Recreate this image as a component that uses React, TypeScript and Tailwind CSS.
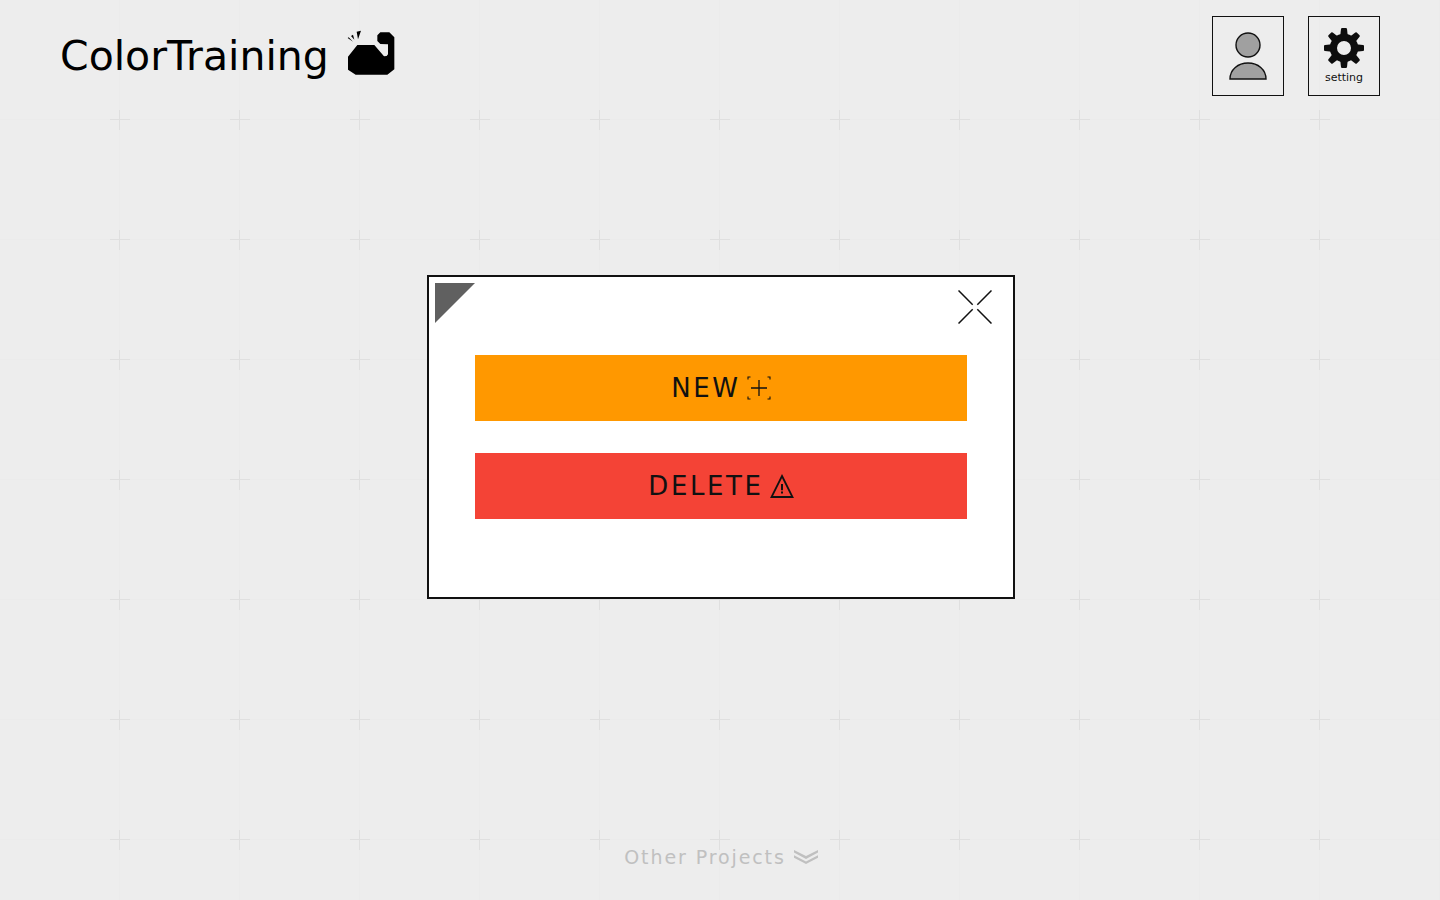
const toothAngles = [0, 45, 90, 135, 180, 225, 270, 315];

function GridBackground() {
  return (
    <div aria-hidden="true" className="pointer-events-none absolute inset-0 -z-10 bg-[#ededed]">
      <svg className="absolute inset-0 h-full w-full">
        <defs>
          <pattern id="lines" width="120" height="120" patternUnits="userSpaceOnUse">
            <path d="M119.5 0V120M0 119.5H120" stroke="#ebebeb" />
          </pattern>
        </defs>
        <rect width="100%" height="100%" fill="url(#lines)" />
      </svg>
      <div className="absolute inset-0 overflow-hidden px-15">
        <svg className="h-full w-full">
          <defs>
            <pattern id="marks" y="60" width="120" height="120" patternUnits="userSpaceOnUse">
              <path d="M59.5 50V70M50 59.5H70" stroke="#dfdfdf" />
            </pattern>
          </defs>
          <rect y="60" width="100%" height="100%" fill="url(#marks)" />
        </svg>
      </div>
    </div>
  );
}

function ArmLogo() {
  return (
    <svg aria-hidden="true" viewBox="24 24 144 138" className="h-[46px] w-12">
      <path d="M27 104 55 69H106L135 103 143 102 147 97V67L124 66 115 57V40L124 31H151L166 46V142L145 158H50L27 143Z" />
      <path d="M26 48 29 46 42 59ZM36 42 42 38 46 53ZM53 29 66 26 57 52Z" />
    </svg>
  );
}

function PersonIcon() {
  return (
    <svg aria-hidden="true" viewBox="0 0 40 50" className="h-[50px] w-10" fill="#a0a0a0" stroke="#111" strokeWidth="1.4">
      <circle cx="20" cy="14" r="12" />
      <path d="M2 48C2 38.5 10 32 20 32S38 38.5 38 48Z" />
    </svg>
  );
}

function GearIcon() {
  return (
    <svg aria-hidden="true" viewBox="-20 -20 40 40" className="size-10" fill="#0d0d0d">
      <circle r="10.6" fill="none" stroke="#0d0d0d" strokeWidth="7.2" />
      {toothAngles.map((angle) => (
        <path
          key={angle}
          transform={`rotate(${angle})`}
          d="M-3.8-12 -3-19Q-2.8-20-2-20H2Q2.8-20 3-19L3.8-12Z"
        />
      ))}
    </svg>
  );
}

function CloseIcon() {
  return (
    <svg aria-hidden="true" viewBox="0 0 34 34" className="size-[34px]" stroke="#111" strokeWidth="1.5">
      <path d="M.5.5 14.7 14.7M33.5.5 19.3 14.7M.5 33.5 14.7 19.3M33.5 33.5 19.3 19.3" />
    </svg>
  );
}

function AddIcon() {
  return (
    <svg aria-hidden="true" viewBox="0 0 24 24" className="size-6" fill="none" stroke="#111">
      <path d="M12 4V20M4 12H20" strokeWidth="1.3" />
      <path d="M1 3.5V1H3.5M20.5 1H23V3.5M23 20.5V23H20.5M3.5 23H1V20.5" strokeWidth="1.1" />
    </svg>
  );
}

function WarningIcon() {
  return (
    <svg aria-hidden="true" viewBox="0 0 24 24" className="size-6" fill="none" stroke="#111">
      <path d="M12 2 22.5 23H1.5Z" strokeWidth="1.8" />
      <path d="M12 10V16.2M12 17.6V19.4" strokeWidth="2" />
    </svg>
  );
}

function DoubleChevron() {
  return (
    <svg aria-hidden="true" viewBox="0 0 24 14" className="h-3.5 w-6" fill="#c0c0c0">
      <path d="M0 0 12 6 24 0V2.6L12 9 0 2.6Z" />
      <path d="M0 5.2 12 11.4 24 5.2V7.8L12 14 0 7.8Z" />
    </svg>
  );
}

export default function App() {
  return (
    <div className="relative isolate flex min-h-screen flex-col font-['DejaVu_Sans',sans-serif] text-[#111]">
      <GridBackground />

      <header className="flex items-center justify-between px-15 py-4">
        <div className="flex items-start gap-[18px]">
          <h1 className="text-[41px] leading-[52px] text-black">ColorTraining</h1>
          <ArmLogo />
        </div>
        <nav className="flex gap-6">
          <button type="button" aria-label="Account" className="flex h-20 w-18 items-center justify-center border border-[#111]">
            <PersonIcon />
          </button>
          <button type="button" className="flex h-20 w-18 flex-col items-center justify-center gap-1 border border-[#111] text-[11px] leading-3">
            <GearIcon />
            setting
          </button>
        </nav>
      </header>

      <main className="flex flex-1 items-center justify-center pl-0.5">
        <section role="dialog" aria-label="Color set" className="w-full max-w-[588px] border-2 border-[#111] bg-white px-1.5 pt-1.5 pb-[78px]">
          <div className="flex h-12 items-center justify-between pr-[15px]">
            <svg aria-hidden="true" viewBox="0 0 40 40" className="size-10 self-start" fill="#606060">
              <path d="M0 0H40L0 40Z" />
            </svg>
            <button type="button" aria-label="Close">
              <CloseIcon />
            </button>
          </div>
          <div className="mx-10 mt-6 flex flex-col gap-8 text-[26px]">
            <button type="button" className="flex h-[66px] items-center justify-center gap-1.5 bg-[#ff9800] tracking-widest">
              NEW
              <AddIcon />
            </button>
            <button type="button" className="flex h-[66px] items-center justify-center gap-1.5 bg-[#f44336] tracking-widest">
              DELETE
              <WarningIcon />
            </button>
          </div>
        </section>
      </main>

      <footer className="flex justify-center pt-[83px] pb-[31px] pl-0.5">
        <a href="#projects" className="flex items-center gap-2 text-[19px] leading-6 tracking-widest text-[#c0c0c0]">
          Other Projects
          <DoubleChevron />
        </a>
      </footer>
    </div>
  );
}
